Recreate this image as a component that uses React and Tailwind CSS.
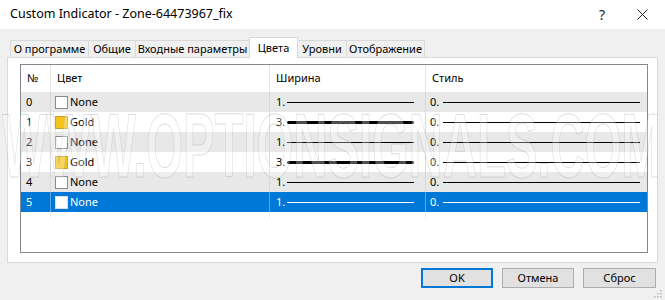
import React from "react";

const rows = [
  { n: 0, gold: false, name: "None", w: 1 },
  { n: 1, gold: true, name: "Gold", w: 3 },
  { n: 2, gold: false, name: "None", w: 1 },
  { n: 3, gold: true, name: "Gold", w: 3 },
  { n: 4, gold: false, name: "None", w: 1 },
  { n: 5, gold: false, name: "None", w: 1 },
];

const tabs = [
  { label: "О программе", w: "w-[79px]" },
  { label: "Общие", w: "w-[48px]" },
  { label: "Входные параметры", w: "w-[115px]" },
  { label: "Цвета", w: "w-[49px]", active: true },
  { label: "Уровни", w: "w-[50px]" },
  { label: "Отображение", w: "w-[79px]" },
];

function Row({ row }) {
  const selected = row.n === 5;
  const bg = selected ? "bg-[#0078d7] text-white" : row.n % 2 === 0 ? "bg-[#e8e8e8] text-black" : "bg-white text-black";
  const divider = selected ? "border-[#5aa6e6]" : "border-[#d9d9d9]";
  const line = selected ? "bg-white" : "bg-black";

  return (
    <div className={`grid grid-cols-[29px_219px_156px_1fr] h-[20px] items-stretch ${bg}`}>
      <div className="flex items-center pl-[5px]">{row.n}</div>
      <div className={`flex items-center pl-[4px] gap-[2px] border-l ${divider}`}>
        <span
          className={`w-[13px] h-[13px] border ${
            row.gold ? "bg-[#f4c418] border-[#c9a227]" : selected ? "bg-white border-[#e0e0e0]" : "bg-white border-[#8a8a8a]"
          }`}
        />
        <span>{row.name}</span>
      </div>
      <div className={`flex items-center pl-[6px] pr-[11px] border-l ${divider}`}>
        <span className="w-[11px]">{row.w}.</span>
        {row.w === 3 ? (
          <span className={`flex-1 h-[3px] rounded-full ${line}`} />
        ) : (
          <span className={`flex-1 h-px ${line}`} />
        )}
      </div>
      <div className={`flex items-center pl-[4px] pr-[7px] border-l ${divider}`}>
        <span className="w-[13px]">0.</span>
        <span className={`flex-1 h-px ${line}`} />
      </div>
    </div>
  );
}

export default function App() {
  return (
    <div className="relative w-[665px] h-[300px] overflow-hidden bg-[#f0f0f0] font-['Noto_Sans','DejaVu_Sans',sans-serif] text-[11px] text-black">
      {/* title bar */}
      <div className="h-[29px] bg-white flex items-center pl-[10px]">
        <span className="text-[12.5px]">Custom Indicator - Zone-64473967_fix</span>
        <span className="ml-auto mr-[32px] text-[14px] text-[#222]">?</span>
        <svg className="mr-[17px]" width="11" height="11" viewBox="0 0 11 11">
          <path d="M0.5 0.5 L10.5 10.5 M10.5 0.5 L0.5 10.5" stroke="#222" strokeWidth="1" />
        </svg>
      </div>

      {/* tabs */}
      <div className="flex items-end pl-[10px] mt-[8px] h-[20px]">
        {tabs.map((t) =>
          t.active ? (
            <div key={t.label} className={`relative z-10 h-[21px] -mb-px -ml-px ${t.w} flex items-center justify-center bg-white border border-b-0 border-[#d9d9d9]`}>
              {t.label}
            </div>
          ) : (
            <div key={t.label} className={`h-[17px] ${t.w} flex items-center justify-center bg-[#f0f0f0] border border-b-0 border-[#d9d9d9] -ml-px first:ml-0`}>
              {t.label}
            </div>
          )
        )}
      </div>

      {/* tab panel */}
      <div className="mx-[7px] h-[206px] bg-white border border-[#d9d9d9] pt-[6px] pl-[12px] pr-[9px]">
        <div className="h-[189px] border border-[#828790] bg-white">
          <div className="grid grid-cols-[29px_219px_156px_1fr] h-[27px] items-stretch">
            <div className="flex items-center pl-[6px]">№</div>
            <div className="flex items-center pl-[6px] border-l border-[#e5e5e5]">Цвет</div>
            <div className="flex items-center pl-[6px] border-l border-[#e5e5e5]">Ширина</div>
            <div className="flex items-center pl-[6px] border-l border-[#e5e5e5]">Стиль</div>
          </div>
          {rows.map((r) => (
            <Row key={r.n} row={r} />
          ))}
          <div className="grid grid-cols-[29px_219px_156px_1fr] h-[6px]">
            <div />
            <div className="border-l border-[#eeeeee]" />
            <div className="border-l border-[#eeeeee]" />
            <div className="border-l border-[#eeeeee]" />
          </div>
        </div>
      </div>

      {/* buttons */}
      <div className="flex justify-end gap-[9px] mt-[5px] pr-[9px]">
        <button className="w-[72px] h-[20px] bg-[#e1e1e1] border-2 border-[#0078d7] flex items-center justify-center">OK</button>
        <button className="w-[72px] h-[20px] bg-[#e1e1e1] border border-[#adadad] flex items-center justify-center">Отмена</button>
        <button className="w-[73px] h-[20px] bg-[#e1e1e1] border border-[#adadad] flex items-center justify-center">Сброс</button>
      </div>

      {/* size grip */}
      <svg className="absolute right-[3px] bottom-[2px]" width="9" height="9" viewBox="0 0 9 9">
        <rect x="7" y="1" width="1.5" height="1.5" fill="#b8b8b8" />
        <rect x="4" y="4" width="1.5" height="1.5" fill="#b8b8b8" />
        <rect x="7" y="4" width="1.5" height="1.5" fill="#b8b8b8" />
        <rect x="1" y="7" width="1.5" height="1.5" fill="#b8b8b8" />
        <rect x="4" y="7" width="1.5" height="1.5" fill="#b8b8b8" />
        <rect x="7" y="7" width="1.5" height="1.5" fill="#b8b8b8" />
      </svg>

      {/* watermark */}
      <div className="pointer-events-none absolute left-[2px] top-[101px] origin-left scale-x-[0.525] whitespace-nowrap font-['Liberation_Sans',sans-serif] font-bold text-[90px] leading-none text-[rgba(255,255,255,0.3)] [-webkit-text-stroke:1px_rgba(160,160,160,0.35)]">
        WWW.OPTIONSIGNALS.COM
      </div>
    </div>
  );
}
